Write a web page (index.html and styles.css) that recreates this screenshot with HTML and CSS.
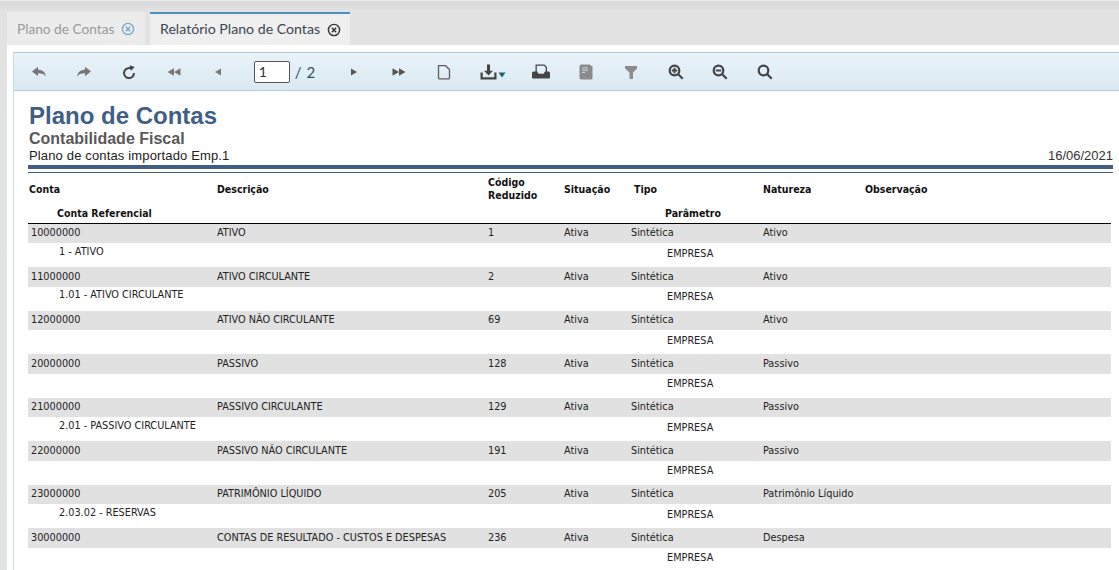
FILE: index.html
```html
<!DOCTYPE html>
<html lang="pt">
<head>
<meta charset="utf-8">
<title>Relatório Plano de Contas</title>
<link rel="stylesheet" href="styles.css">
</head>
<body>
<nav class="tabs">
  <div class="tab">Plano de Contas
    <svg class="close" viewBox="0 0 14 14"><circle cx="7" cy="7" r="5.6"/><path d="M4.8 4.8l4.4 4.4M9.2 4.8l-4.4 4.4"/></svg>
  </div>
  <div class="tab active">Relatório Plano de Contas
    <svg class="close" viewBox="0 0 14 14"><circle cx="7" cy="7" r="5.6"/><path d="M4.8 4.8l4.4 4.4M9.2 4.8l-4.4 4.4"/></svg>
  </div>
</nav>
<main class="main">
  <div class="viewer">
    <div class="toolbar">
      <span class="btn"><svg class="ic muted" viewBox="0 0 16 16"><path d="M1 7.500L7 2.700v3c4.500 0 7.300 2.500 8 7-1.800-2.500-4-3.400-8-3.400v3z"/></svg></span>
      <span class="btn"><svg class="ic muted" viewBox="0 0 16 16"><path d="M15 7.500L9 2.700v3c-4.500 0-7.300 2.500-8 7 1.800-2.500 4-3.400 8-3.400v3z"/></svg></span>
      <span class="btn"><svg class="ic dark" viewBox="0 0 16 16"><path class="line" d="M11.300 5.300A5 5 0 1 0 13 9"/><path d="M8.600 1.300l5 1.800-3.700 3.600z"/></svg></span>
      <span class="btn"><svg class="ic muted" viewBox="0 0 16 16"><path d="M1.500 8L8 4.300v7.400zM8 8l6.500-3.700v7.400z"/></svg></span>
      <span class="btn"><svg class="ic muted" viewBox="0 0 16 16"><path d="M5 8l6-3.500v7z"/></svg></span>
      <span class="pager"><input class="page-input" value="1" aria-label="Página"><span class="page-total">/ 2</span></span>
      <span class="btn"><svg class="ic dark2" viewBox="0 0 16 16"><path d="M5 4.500L11 8l-6 3.500z"/></svg></span>
      <span class="btn"><svg class="ic dark2" viewBox="0 0 16 16"><path d="M1.500 4.300L8 8l-6.500 3.700zM8 4.300L14.500 8 8 11.700z"/></svg></span>
      <span class="btn"><svg class="ic" viewBox="0 0 16 16"><path class="line thin" d="M2.500 1.700h7L13.500 5.500V14a.8.8 0 0 1-.8.8H3.300a.8.8 0 0 1-.8-.8z"/></svg></span>
      <span class="btn btn-wide"><svg class="ic-wide dark" viewBox="0 0 26 16"><path d="M7 0.500h3v6.300h3L8.500 11.500 4 6.800h3z"/><path d="M0.500 8.500h2.200v4.800h11.600V8.500h2.200v7H0.500z"/><path class="caret" d="M18.500 8.500h7L22 13.500z"/></svg></span>
      <span class="btn"><svg class="ic-print dark" viewBox="0 0 18 15"><path d="M3.500.5h9L15 3v5h-1.300V3.500L12 1.800H4.800V8H3.500z"/><path d="M1.500 7.500h3.500l1.500 2.200h5l1.500-2.200h3.500A1.500 1.500 0 0 1 18 9v4.500a1 1 0 0 1-1 1H1a1 1 0 0 1-1-1V9a1.500 1.500 0 0 1 1.500-1.500z"/></svg></span>
      <span class="btn"><svg class="ic-tall gray" viewBox="0 0 14 16"><path d="M2.500.5h8A1.500 1.500 0 0 1 12 2h1.500v12a1.500 1.500 0 0 1-1.500 1.500H2.500A2 2 0 0 1 .5 13.500v-11a2 2 0 0 1 2-2z"/><path class="cut" d="M3 4h6M3 6.200h6M3 8.400h3"/></svg></span>
      <span class="btn"><svg class="ic gray" viewBox="0 0 16 16"><path d="M2 2h12v2.500L10 8.500V15H6.500V8.500L2 4.500z"/></svg></span>
      <span class="btn"><svg class="ic dark" viewBox="0 0 16 16"><circle class="line bold" cx="6.500" cy="6.500" r="4.800"/><path class="line bold" d="M10.200 10.200L14.700 14.700"/><path d="M5.600 3.800h1.800v1.800h1.800v1.800H7.400v1.800H5.600V7.400H3.800V5.600h1.800z"/></svg></span>
      <span class="btn"><svg class="ic dark" viewBox="0 0 16 16"><circle class="line bold" cx="6.500" cy="6.500" r="4.800"/><path class="line bold" d="M10.200 10.200L14.700 14.700"/><path d="M3.800 5.500h5.400v2H3.800z"/></svg></span>
      <span class="btn"><svg class="ic dark" viewBox="0 0 16 16"><circle class="line bold" cx="6.500" cy="6.500" r="4.800"/><path class="line bold" d="M10.200 10.200L14.700 14.700"/></svg></span>
    </div>
    <div class="report">
      <header class="report-head">
        <h1 class="title">Plano de Contas</h1>
        <h2 class="subtitle">Contabilidade Fiscal</h2>
        <div class="meta"><span class="meta-name">Plano de contas importado Emp.1</span><span class="meta-date">16/06/2021</span></div>
      </header>
      <div class="rule-thick"></div>
      <div class="rule-thin"></div>
      <div class="col-head">
        <div class="cols cols-head">
          <span>Conta</span><span>Descrição</span><span>Código<br>Reduzido</span><span>Situação</span><span class="tipo">Tipo</span><span>Natureza</span><span>Observação</span>
        </div>
        <div class="sub-head"><span>Conta Referencial</span><span>Parâmetro</span></div>
      </div>
      <section class="rows">
        <div class="record"><div class="cols data"><span>10000000</span><span>ATIVO</span><span>1</span><span>Ativa</span><span>Sintética</span><span>Ativo</span></div><div class="sub"><span class="ref">1 - ATIVO</span><span class="param">EMPRESA</span></div></div>
        <div class="record"><div class="cols data"><span>11000000</span><span>ATIVO CIRCULANTE</span><span>2</span><span>Ativa</span><span>Sintética</span><span>Ativo</span></div><div class="sub"><span class="ref">1.01 - ATIVO CIRCULANTE</span><span class="param">EMPRESA</span></div></div>
        <div class="record"><div class="cols data"><span>12000000</span><span>ATIVO NÃO CIRCULANTE</span><span>69</span><span>Ativa</span><span>Sintética</span><span>Ativo</span></div><div class="sub"><span class="ref"></span><span class="param">EMPRESA</span></div></div>
        <div class="record"><div class="cols data"><span>20000000</span><span>PASSIVO</span><span>128</span><span>Ativa</span><span>Sintética</span><span>Passivo</span></div><div class="sub"><span class="ref"></span><span class="param">EMPRESA</span></div></div>
        <div class="record"><div class="cols data"><span>21000000</span><span>PASSIVO CIRCULANTE</span><span>129</span><span>Ativa</span><span>Sintética</span><span>Passivo</span></div><div class="sub"><span class="ref">2.01 - PASSIVO CIRCULANTE</span><span class="param">EMPRESA</span></div></div>
        <div class="record"><div class="cols data"><span>22000000</span><span>PASSIVO NÃO CIRCULANTE</span><span>191</span><span>Ativa</span><span>Sintética</span><span>Passivo</span></div><div class="sub"><span class="ref"></span><span class="param">EMPRESA</span></div></div>
        <div class="record"><div class="cols data"><span>23000000</span><span>PATRIMÔNIO LÍQUIDO</span><span>205</span><span>Ativa</span><span>Sintética</span><span>Patrimônio Líquido</span></div><div class="sub"><span class="ref">2.03.02 - RESERVAS</span><span class="param">EMPRESA</span></div></div>
        <div class="record"><div class="cols data"><span>30000000</span><span>CONTAS DE RESULTADO - CUSTOS E DESPESAS</span><span>236</span><span>Ativa</span><span>Sintética</span><span>Despesa</span></div><div class="sub"><span class="ref"></span><span class="param">EMPRESA</span></div></div>
      </section>
    </div>
  </div>
</main>
</body>
</html>
```
FILE: styles.css
```css
* { box-sizing: border-box; }
html, body { height: 570px; }
body {
  margin: 0;
  overflow: hidden;
  display: flex;
  flex-direction: column;
  background: linear-gradient(#f4f4f4 0, #d6d6d6 2px, #e2e2e2 10px, #e3e3e3 100%);
  font-family: "DejaVu Sans", sans-serif;
  color: #222;
}
.tabs {
  display: flex;
  gap: 5px;
  height: 45px;
  padding: 12px 0 0 7px;
  flex: none;
}
.tab {
  display: flex;
  align-items: center;
  gap: 7px;
  height: 33px;
  width: 138px;
  padding-left: 10px;
  background: #ececec;
  color: #9a9a9a;
  font: 13.700px/1 Lato, sans-serif;
}
.tab.active {
  width: 200px;
  background: #efefef;
  color: #3b4652;
  border-top: 2px solid #4a8fc0;
  font-size: 14.150px;
}
.close { width: 14px; height: 14px; fill: none; stroke: #79a9cc; stroke-width: 1.4; }
.active .close { stroke: #333; }
.main {
  flex: 1;
  min-height: 0;
  margin-left: 7px;
  padding: 7px 0 0 6px;
  background: #fff;
  overflow: hidden;
}
.viewer { height: 100%; border-left: 1px solid #c3d9e3; }
.toolbar {
  display: flex;
  align-items: center;
  height: 39px;
  padding-left: 3px;
  background: linear-gradient(#e9f3f9, #d9e9f3);
  border-top: 1px solid #adcad7;
  border-bottom: 1px solid #adcad7;
}
.btn {
  flex: none;
  width: 44.750px;
  display: flex;
  justify-content: center;
  align-items: center;
}
.btn-wide { width: 53px; }
.ic { width: 16px; height: 16px; }
.ic-wide { width: 26px; height: 16px; }
.ic-print { width: 18px; height: 15px; }
.ic-tall { width: 14px; height: 16px; }
.muted { fill: #777; }
.dark { fill: #444; }
.dark2 { fill: #555; }
.gray { fill: #8b8b8b; }
.line { fill: none; stroke: #444; stroke-width: 2; }
.line.thin { stroke: #5c5c5c; stroke-width: 1.3; }
.line.bold { stroke-width: 2.2; }
.caret { fill: #1f5f72; }
.cut { fill: none; stroke: #cfd8dd; stroke-width: 1; }
.pager {
  flex: none;
  width: 91px;
  padding-left: 13px;
  display: flex;
  align-items: center;
  gap: 5px;
}
.page-input {
  width: 36px;
  height: 22px;
  padding: 0 4px;
  border: 1px solid #555;
  border-radius: 2px;
  background: #fff;
  color: #333;
  font: 14px Lato, sans-serif;
}
.page-total { color: #33505f; font: 15px Lato, sans-serif; letter-spacing: .6px; }
.report { padding: 11px 6px 0 14px; }
.report-head { height: 63px; padding-left: 1px; font-family: "Liberation Sans", sans-serif; }
.title { margin: 0; height: 27px; font-size: 24px; line-height: 27px; font-weight: 700; color: #3f5f87; }
.subtitle { margin: 0; height: 19px; font-size: 16px; line-height: 19px; font-weight: 700; color: #595959; }
.meta { display: flex; justify-content: space-between; font-size: 13px; line-height: 16px; color: #222; }
.meta-name { letter-spacing: .15px; }
.meta-date { color: #333; }
.rule-thick { height: 4px; background: #3f5f87; }
.rule-thin { height: 1px; margin-top: 3px; background: #3f5f75; }
.cols { display: grid; }
.col-head {
  height: 49.500px;
  margin-right: 2px;
  border-bottom: 1px solid #000;
  font-size: 10.500px;
  font-weight: 700;
  font-stretch: condensed;
  color: #111;
}
.cols-head { height: 30px; padding-left: 1px; align-items: center; margin-top: 1px; line-height: 13px; grid-template-columns: 188px 271px 76px 68px 131px 102px 1fr; }
.tipo { padding-left: 2px; }
.sub-head { display: grid; grid-template-columns: 608px 1fr; padding-left: 29px; margin-top: 2px; line-height: 14px; }
.rows { font-size: 10.800px; font-stretch: condensed; color: #222; }
.record { height: 43.500px; margin-right: 2px; }
.data { height: 19.500px; align-items: center; background: #e1e1e1; padding: 0 0 1px 3px; grid-template-columns: 186px 271px 76px 67px 132px 102px 1fr; }
.sub { display: grid; grid-template-columns: 608px 1fr; padding: .75px 0 0 31px; }
.ref { line-height: 16px; }
.param { line-height: 20px; }
```
